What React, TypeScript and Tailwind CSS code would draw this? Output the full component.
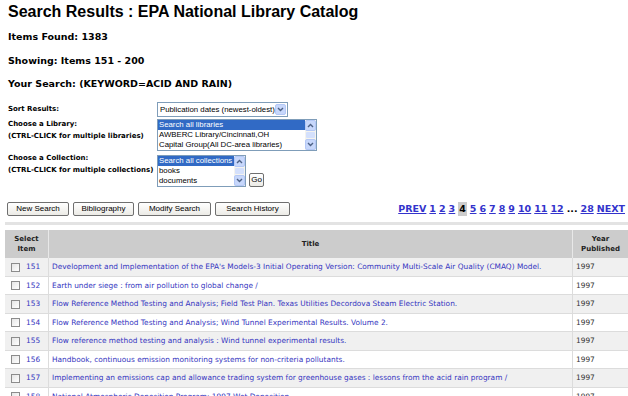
import React from "react";

const verdana = "font-['DejaVu_Sans',Verdana,sans-serif]";
const arial = "font-['Liberation_Sans',Arial,sans-serif]";

const rows = [
  { n: 151, title: "Development and Implementation of the EPA's Models-3 Initial Operating Version: Community Multi-Scale Air Quality (CMAQ) Model." },
  { n: 152, title: "Earth under siege : from air pollution to global change /" },
  { n: 153, title: "Flow Reference Method Testing and Analysis; Field Test Plan. Texas Utilities Decordova Steam Electric Station." },
  { n: 154, title: "Flow Reference Method Testing and Analysis; Wind Tunnel Experimental Results. Volume 2." },
  { n: 155, title: "Flow reference method testing and analysis : Wind tunnel experimental results." },
  { n: 156, title: "Handbook, continuous emission monitoring systems for non-criteria pollutants." },
  { n: 157, title: "Implementing an emissions cap and allowance trading system for greenhouse gases : lessons from the acid rain program /" },
  { n: 158, title: "National Atmospheric Deposition Program: 1997 Wet Deposition." },
];

const pages = ["1", "2", "3", "4", "5", "6", "7", "8", "9", "10", "11", "12"];

const Arrow = ({ up }: { up?: boolean }) => (
  <div className="w-[11px] h-[11px] bg-[#c7d7fb] border border-[#b4c8f6] rounded-[2px] flex items-center justify-center">
    <svg width="7" height="5" viewBox="0 0 7 5">
      <path d={up ? "M1 4 L3.5 1.5 L6 4" : "M1 1 L3.5 3.5 L6 1"} stroke="#4d6185" strokeWidth="1.4" fill="none" />
    </svg>
  </div>
);

const Scrollbar = () => (
  <div className="w-[11px] flex flex-col bg-[#f4f3ee]">
    <Arrow up />
    <div className="flex-1 px-[1px] py-[1px]">
      <div className="h-full bg-[#d4e0fc] rounded-[1px]" />
    </div>
    <Arrow />
  </div>
);

const Listbox = ({ width, items }: { width: string; items: string[] }) => (
  <div className={`${width} h-[32px] border border-[#7f9db9] bg-white flex ${arial} text-[7.8px]`}>
    <div className="flex-1 overflow-hidden">
      {items.map((it, i) => (
        <div
          key={it}
          className={`h-[10px] leading-[10px] pl-[1px] whitespace-nowrap ${i === 0 ? "bg-[#316ac5] text-white" : "text-black"}`}
        >
          {it}
        </div>
      ))}
    </div>
    <Scrollbar />
  </div>
);

const Btn = ({ label, w }: { label: string; w: string }) => (
  <div
    className={`${w} h-[14px] border border-[#6f6f6f] rounded-[2px] bg-gradient-to-b from-white to-[#ecebe6] flex items-center justify-center ${arial} text-[8px] text-black`}
  >
    {label}
  </div>
);

const App = () => {
  return (
    <div className={`w-[628px] h-[396px] overflow-hidden bg-white text-black ${verdana}`}>
      <div className="pl-[8px]">
        <h1 className={`h-[24px] leading-[24px] text-[16px] font-bold ${arial}`}>
          Search Results : EPA National Library Catalog
        </h1>
        <p className="mt-[6px] h-[14px] leading-[14px] text-[9.5px] font-bold">Items Found: 1383</p>
        <p className="mt-[10px] h-[14px] leading-[14px] text-[9.5px] font-bold">Showing: Items 151 - 200</p>
        <p className="mt-[9px] h-[14px] leading-[14px] text-[9.5px] font-bold">Your Search: (KEYWORD=ACID AND RAIN)</p>

        {/* search form */}
        <div className="mt-[11px] flex flex-col text-[7px] font-bold">
          <div className="flex items-center h-[15px]">
            <span className="w-[149px]">Sort Results:</span>
            <div className="w-[131px] h-[15px] border border-[#7f9db9] bg-white flex items-center">
              <span className={`flex-1 pl-[2px] ${arial} text-[7.8px] font-normal whitespace-nowrap`}>
                Publication dates (newest-oldest)
              </span>
              <div className="mr-[1px]">
                <Arrow />
              </div>
            </div>
          </div>
          <div className="flex mt-[2px]">
            <div className="w-[149px] -mt-[1px] leading-[12px]">
              <div>Choose a Library:</div>
              <div>(CTRL-CLICK for multiple libraries)</div>
            </div>
            <div className="font-normal">
              <Listbox
                width="w-[160px]"
                items={["Search all libraries", "AWBERC Library/Cincinnati,OH", "Capital Group(All DC-area libraries)"]}
              />
            </div>
          </div>
          <div className="flex mt-[4px]">
            <div className="w-[149px] -mt-[3px] leading-[12px]">
              <div>Choose a Collection:</div>
              <div>(CTRL-CLICK for multiple collections)</div>
            </div>
            <div className="font-normal flex items-end gap-[3px]">
              <Listbox width="w-[89px]" items={["Search all collections", "books", "documents"]} />
              <div
                className={`w-[15px] h-[14px] border border-[#6f6f6f] rounded-[2px] bg-gradient-to-b from-white to-[#ecebe6] flex items-center justify-center ${arial} text-[8px]`}
              >
                Go
              </div>
            </div>
          </div>
        </div>
      </div>

      {/* buttons + pagination */}
      <div className="mt-[15px] pl-[7px] pr-[3px] flex items-center">
        <div className="flex gap-[4px]">
          <Btn label="New Search" w="w-[62px]" />
          <Btn label="Bibliography" w="w-[61px]" />
          <Btn label="Modify Search" w="w-[73px]" />
          <Btn label="Search History" w="w-[75px]" />
        </div>
        <div className="ml-auto flex items-center gap-[3px] text-[9.5px] font-bold text-[#3333cc]">
          <span className="underline">PREV</span>
          {pages.map((p) =>
            p === "4" ? (
              <span key={p} className="bg-[#cccccc] text-black px-[1px]">
                {p}
              </span>
            ) : (
              <span key={p} className="underline">
                {p}
              </span>
            )
          )}
          <span className="text-black">...</span>
          <span className="underline">28</span>
          <span className="underline">NEXT</span>
        </div>
      </div>

      <div className="mt-[6px] ml-[5px] h-[3px] bg-[#e3e3e3]" />

      {/* results table */}
      <div className="mt-[5px] ml-[5px]">
        <div className="grid grid-cols-[44px_524px_55px] h-[28px] bg-[#cccccc] text-[7px] font-bold text-[#222]">
          <div className="flex flex-col items-center justify-center leading-[10px] border-r border-[#e8e8e8]">
            <span>Select</span>
            <span>Item</span>
          </div>
          <div className="flex items-center justify-center border-r border-[#e8e8e8]">Title</div>
          <div className="flex flex-col items-center justify-center leading-[10px]">
            <span>Year</span>
            <span>Published</span>
          </div>
        </div>
        {rows.map((r, i) => (
          <div
            key={r.n}
            className={`grid grid-cols-[44px_524px_55px] h-[18.5px] border-b border-[#dcdcdc] text-[7.4px] ${
              i % 2 === 0 ? "bg-[#f0f0f0]" : "bg-white"
            }`}
          >
            <div className="flex items-center border-r border-[#dcdcdc] pl-[6px] gap-[6px]">
              <div className="w-[9px] h-[9px] border border-[#8c8c8c] bg-gradient-to-br from-[#e6e6e6] to-white" />
              <span className="text-[#3535c0]">{r.n}</span>
            </div>
            <div className="flex items-center pl-[3px] border-r border-[#dcdcdc] text-[#3535c0] whitespace-nowrap overflow-hidden">
              {r.title}
            </div>
            <div className="flex items-center pl-[3px] text-[#333]">1997</div>
          </div>
        ))}
      </div>
    </div>
  );
};

export default App;
